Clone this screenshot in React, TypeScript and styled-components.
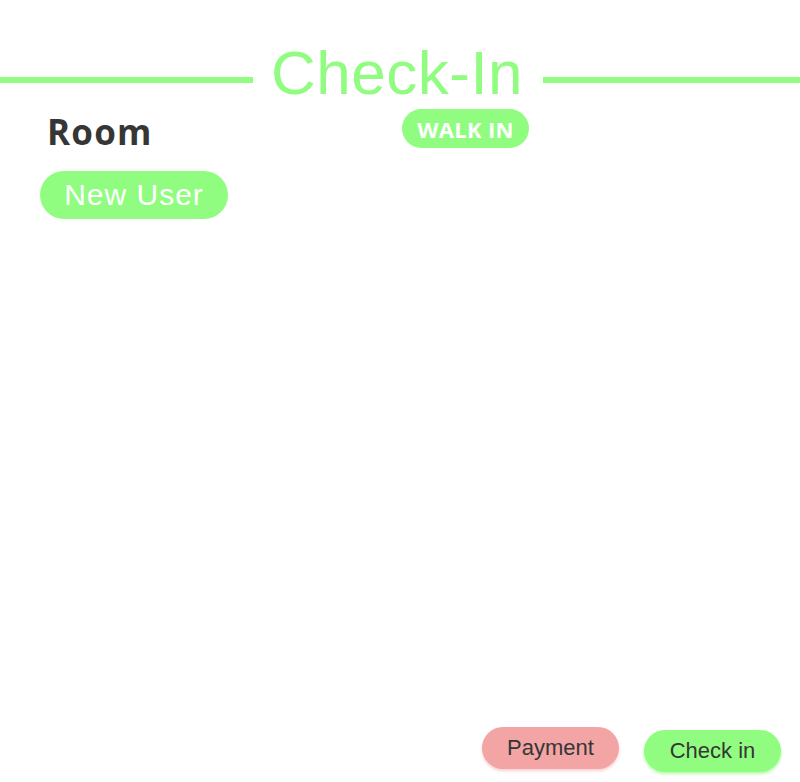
import styled, { createGlobalStyle } from "styled-components";

const GlobalStyle = createGlobalStyle`
  html, body {
    margin: 0;
    padding: 0;
    background: #ffffff;
  }
  body {
    font-family: "Liberation Sans", Arial, sans-serif;
  }
`;

const GREEN = "#90fd80";
const PINK = "#f3a4a4";
const INK = "#363636";

const Page = styled.div`
  width: 800px;
  height: 782px;
  display: flex;
  flex-direction: column;
  overflow: hidden;
  background: #fff;
`;

const Header = styled.header`
  display: flex;
  align-items: flex-start;
  padding-top: 38px;
`;

const Rule = styled.div<{ $width?: number }>`
  height: 6px;
  margin-top: 39px;
  background: ${GREEN};
  ${(p) => (p.$width ? `width: ${p.$width}px;` : "flex: 1;")}
`;

const Title = styled.h1`
  margin: 0 20px 0 18px;
  font-family: "Liberation Sans", Arial, sans-serif;
  font-weight: normal;
  font-size: 62px;
  line-height: 70px;
  letter-spacing: 0.5px;
  color: ${GREEN};
`;

const Content = styled.main`
  padding-left: 40px;
`;

const TopRow = styled.div`
  display: grid;
  grid-template-columns: 362px auto;
  align-items: start;
`;

const Heading = styled.h2`
  margin: 4px 0 0 7px;
  font-family: "Open Sans", sans-serif;
  font-weight: 700;
  font-size: 35px;
  line-height: 40px;
  letter-spacing: 1.2px;
  color: ${INK};
`;

const Badge = styled.span`
  justify-self: start;
  margin-top: 1px;
  width: 127px;
  height: 39px;
  border-radius: 20px;
  background: ${GREEN};
  color: #fff;
  display: flex;
  align-items: center;
  justify-content: center;
  font-family: "Open Sans", sans-serif;
  font-weight: 700;
  font-size: 22px;
  letter-spacing: 0.3px;
`;

const PillButton = styled.button<{ $color: string; $text?: string }>`
  border: none;
  border-radius: 999px;
  background: ${(p) => p.$color};
  color: ${(p) => p.$text || INK};
  font-family: "Liberation Sans", Arial, sans-serif;
  display: flex;
  align-items: center;
  justify-content: center;
  padding: 0;
  cursor: pointer;
`;

const NewUser = styled(PillButton)`
  margin-top: 19px;
  width: 188px;
  height: 48px;
  font-size: 30px;
  letter-spacing: 1px;
`;

const Footer = styled.footer`
  margin-top: auto;
  display: flex;
  justify-content: flex-end;
  align-items: flex-start;
  gap: 25px;
  padding: 0 19px 10px 0;
`;

const ActionButton = styled(PillButton)<{ $glow: string; $offset?: number }>`
  width: 137px;
  height: 42px;
  font-size: 22px;
  margin-top: ${(p) => p.$offset || 0}px;
  box-shadow: 0 2px 3px ${(p) => p.$glow};
`;

export default function App() {
  return (
    <Page>
      <GlobalStyle />
      <Header>
        <Rule $width={253} />
        <Title>Check-In</Title>
        <Rule />
      </Header>

      <Content>
        <TopRow>
          <Heading>Room</Heading>
          <Badge>WALK IN</Badge>
        </TopRow>
        <NewUser $color={GREEN} $text="#ffffff">
          New User
        </NewUser>
      </Content>

      <Footer>
        <ActionButton $color={PINK} $glow="rgba(243, 164, 164, 0.5)">
          Payment
        </ActionButton>
        <ActionButton
          $color={GREEN}
          $glow="rgba(144, 253, 128, 0.7)"
          $offset={3}
        >
          Check in
        </ActionButton>
      </Footer>
    </Page>
  );
}
